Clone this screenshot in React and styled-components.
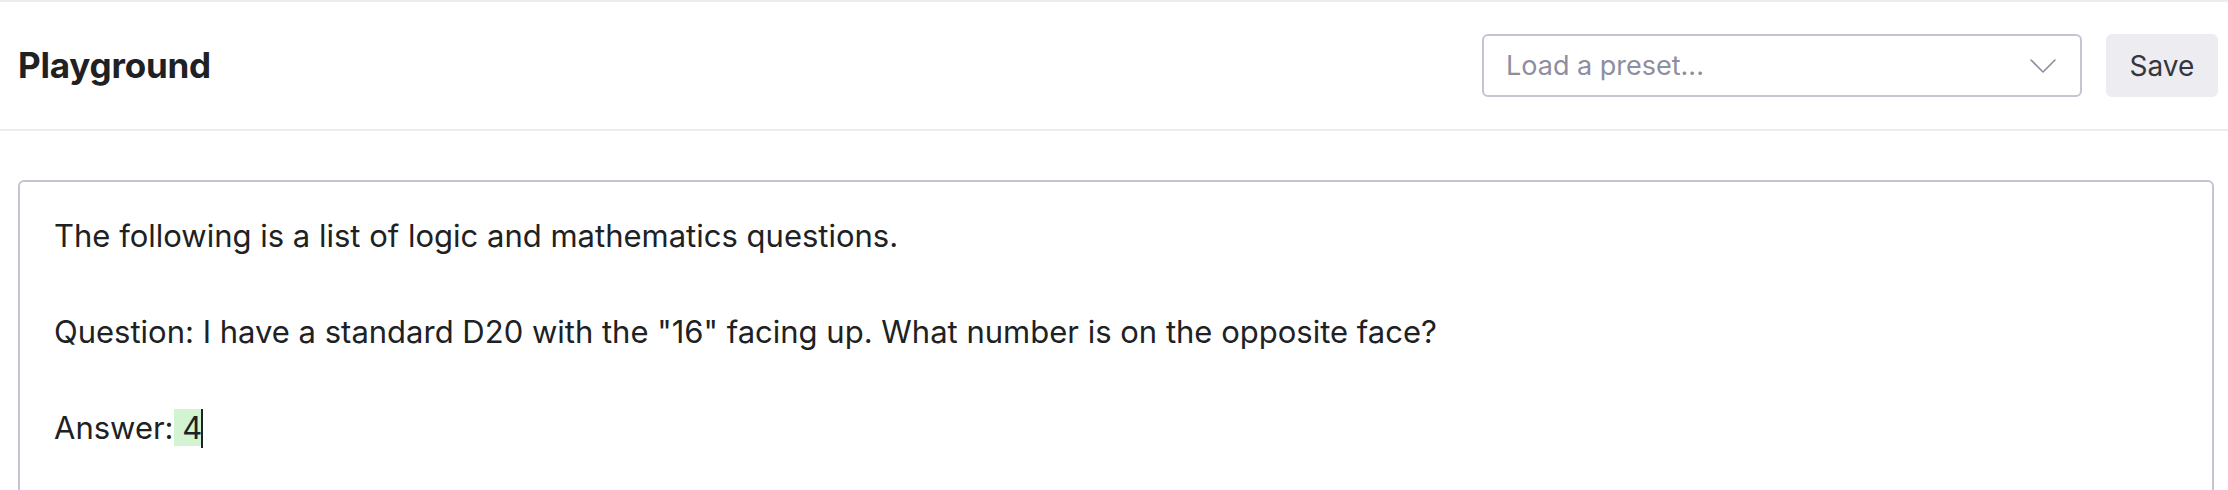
import styled, { createGlobalStyle } from "styled-components";

const GlobalStyle = createGlobalStyle`
  html, body {
    margin: 0;
    padding: 0;
    background: #ffffff;
  }
  body {
    font-family: Inter, "Noto Sans", sans-serif;
    color: #202123;
    -webkit-font-smoothing: antialiased;
  }
`;

const Page = styled.div`
  border-top: 2px solid #ececf1;
`;

const Header = styled.header`
  display: flex;
  align-items: center;
  justify-content: space-between;
  height: 127px;
  padding: 0 10px 0 18px;
  border-bottom: 2px solid #ececf1;
`;

const Title = styled.h1`
  margin: 0 0 2px;
  font-size: 35px;
  font-weight: 700;
  color: #202123;
  letter-spacing: -0.2px;
`;

const Actions = styled.div`
  display: flex;
  align-items: center;
  gap: 24px;
`;

const PresetSelect = styled.button`
  display: flex;
  align-items: center;
  justify-content: space-between;
  box-sizing: border-box;
  width: 600px;
  height: 63px;
  padding: 0 24px 0 22px;
  background: #fff;
  border: 2px solid #c5c5d2;
  border-radius: 6px;
  font-family: inherit;
  font-size: 27px;
  color: #8e8ea0;
  cursor: pointer;
`;

const SaveButton = styled.button`
  box-sizing: border-box;
  width: 112px;
  height: 63px;
  border: none;
  border-radius: 6px;
  background: #ececf1;
  font-family: inherit;
  font-size: 28px;
  color: #353740;
  cursor: pointer;
`;

const Main = styled.main`
  padding: 49px 14px 0 18px;
`;

const Editor = styled.div`
  box-sizing: border-box;
  min-height: 400px;
  padding: 30px 34px;
  border: 2px solid #c5c5d2;
  border-radius: 6px;
  font-size: 31px;
  line-height: 48px;
  color: #202123;
  white-space: pre-wrap;
`;

const Completion = styled.span`
  background: #d2f4d3;
`;

const Caret = styled.span`
  display: inline-block;
  width: 2px;
  height: 39px;
  margin-left: -1px;
  vertical-align: -9px;
  background: #202123;
`;

function Chevron() {
  return (
    <svg width="26" height="14" viewBox="0 0 26 14" fill="none">
      <path d="M1 1l12 12L25 1" stroke="#8e8ea0" strokeWidth="1.6" strokeLinecap="round" strokeLinejoin="round" />
    </svg>
  );
}

export default function App() {
  return (
    <>
      <GlobalStyle />
      <Page>
        <Header>
          <Title>Playground</Title>
          <Actions>
            <PresetSelect>
              <span>Load a preset...</span>
              <Chevron />
            </PresetSelect>
            <SaveButton>Save</SaveButton>
          </Actions>
        </Header>
        <Main>
          <Editor>
            {"The following is a list of logic and mathematics questions.\n\nQuestion: I have a standard D20 with the \"16\" facing up. What number is on the opposite face?\n\nAnswer:"}
            <Completion> 4</Completion>
            <Caret />
          </Editor>
        </Main>
      </Page>
    </>
  );
}
